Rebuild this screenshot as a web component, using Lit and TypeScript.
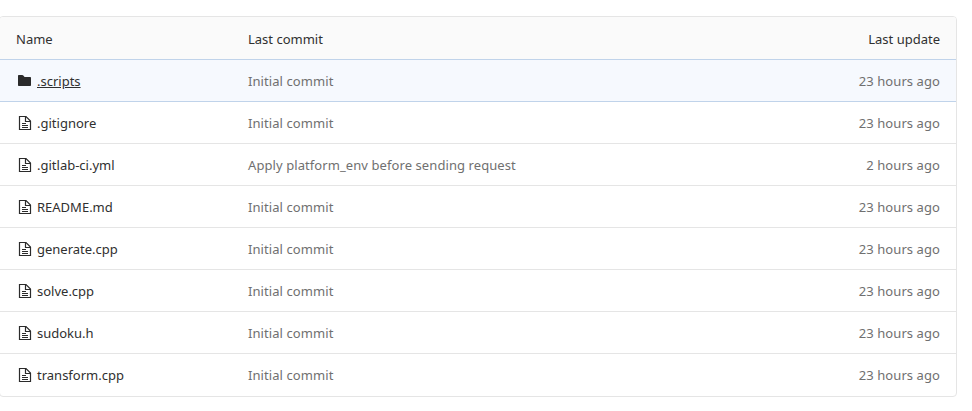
import { LitElement, html, css } from "lit";
import { customElement } from "lit/decorators.js";

const rows = [
  { name: ".scripts", commit: "Initial commit", time: "23 hours ago", folder: true },
  { name: ".gitignore", commit: "Initial commit", time: "23 hours ago" },
  { name: ".gitlab-ci.yml", commit: "Apply platform_env before sending request", time: "2 hours ago" },
  { name: "README.md", commit: "Initial commit", time: "23 hours ago" },
  { name: "generate.cpp", commit: "Initial commit", time: "23 hours ago" },
  { name: "solve.cpp", commit: "Initial commit", time: "23 hours ago" },
  { name: "sudoku.h", commit: "Initial commit", time: "23 hours ago" },
  { name: "transform.cpp", commit: "Initial commit", time: "23 hours ago" },
];

const folderIcon = html`<svg class="icon" viewBox="0 0 16 16" aria-hidden="true">
  <path fill="#2b2b2b" d="M3 2h3.200c.5 0 .8.200 1.100.5L8.600 4H14c.6 0 1 .4 1 1v7c0 .6-.4 1-1 1H3c-.6 0-1-.4-1-1V3c0-.6.400-1 1-1z"/>
</svg>`;

const fileIcon = html`<svg class="icon" viewBox="0 0 16 16" aria-hidden="true">
  <g fill="none" stroke="#2b2b2b" stroke-width="1.200">
    <path d="M3.500 1.500h6.500l4.500 4.500v8.500h-11z"/>
    <path d="M9.500 1.500v5h5"/>
    <path d="M6 8.500h4M6 10.500h6M6 12.500h6"/>
  </g>
</svg>`;

@customElement("app-root")
export class AppRoot extends LitElement {
  static styles = css`
    :host {
      display: block;
      background: #fff;
      font-family: "Noto Sans", "Open Sans", sans-serif;
      font-size: 13px;
      color: #303030;
      padding: 16px 15px 14px 0;
      overflow: hidden;
    }
    .card {
      margin-left: -1px;
      border: 1px solid #e5e5e5;
      border-radius: 4px;
      overflow: hidden;
    }
    .row {
      box-sizing: border-box;
      display: grid;
      grid-template-columns: 232px 1fr 200px;
      align-items: center;
      height: 42px;
      padding: 0 16px;
      border-bottom: 1px solid #e5e5e5;
    }
    .row:last-child {
      border-bottom: 0;
    }
    .head {
      height: 43px;
      padding-top: 1px;
      background: #fafafa;
      border-bottom-color: #c0d3ea;
    }
    .active {
      background: #f6f9fe;
      border-bottom-color: #c0d3ea;
    }
    .right {
      text-align: right;
    }
    .muted {
      color: #707070;
      letter-spacing: 0.08px;
    }
    .name {
      display: flex;
      align-items: center;
      gap: 5px;
    }
    .name a {
      color: #303030;
      text-decoration: none;
    }
    .active .name a {
      text-decoration: underline;
    }
    .icon {
      width: 16px;
      height: 16px;
      flex: none;
    }
  `;

  render() {
    return html`<div class="card">
      <div class="row head">
        <div>Name</div>
        <div>Last commit</div>
        <div class="right">Last update</div>
      </div>
      ${rows.map(
        (r) => html`<div class="row ${r.folder ? "active" : ""}">
          <div class="name">${r.folder ? folderIcon : fileIcon}<a href="#">${r.name}</a></div>
          <div class="muted">${r.commit}</div>
          <div class="right muted">${r.time}</div>
        </div>`
      )}
    </div>`;
  }
}
